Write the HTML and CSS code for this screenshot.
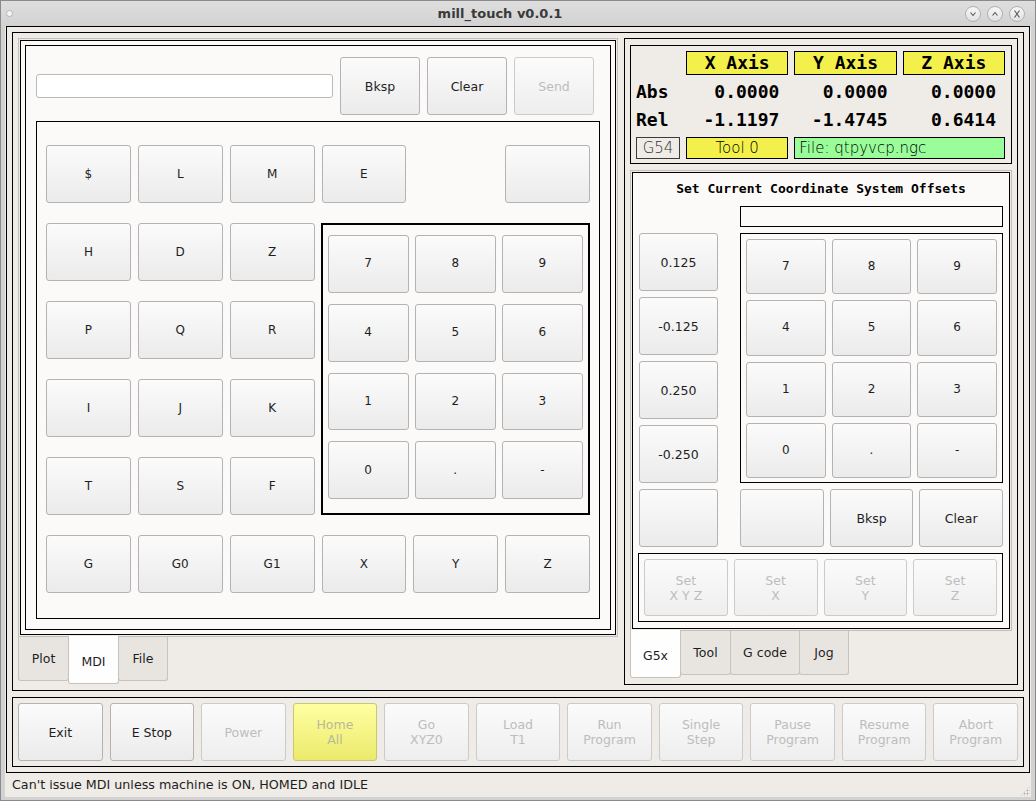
FILE: index.html
```html
<!DOCTYPE html>
<html lang="en">
<head>
<meta charset="utf-8">
<title>mill_touch v0.0.1</title>
<link rel="stylesheet" href="styles.css">
</head>
<body>
<div class="window">
  <div class="titlebar">
    <span class="tb-dot"></span>
    <span class="tb-title">mill_touch v0.0.1</span>
    <div class="tb-btns">
      <span class="tb-btn"><svg width="8" height="8" viewBox="0 0 8 8"><path d="M1.5 2.5 L4 5.5 L6.5 2.5" fill="none" stroke="#555" stroke-width="1.1"/></svg></span>
      <span class="tb-btn"><svg width="8" height="8" viewBox="0 0 8 8"><path d="M1.5 5.5 L4 2.5 L6.5 5.5" fill="none" stroke="#555" stroke-width="1.1"/></svg></span>
      <span class="tb-btn"><svg width="8" height="10" viewBox="0 0 8 10"><path d="M1.5 1.5 L6.5 8.5 M6.5 1.5 L1.5 8.5" fill="none" stroke="#555" stroke-width="1.1"/></svg></span>
    </div>
  </div>
  <div class="client">
    <div class="app-frame">
      <div class="top-frame">
        <div class="left-tabs">
          <div class="pane">
            <div class="page-outer">
              <div class="page-inner">
                <div class="mdi-top">
                  <div class="line-edit"></div>
                  <button class="btn w80">Bksp</button>
                  <button class="btn w80">Clear</button>
                  <button class="btn w80 dis">Send</button>
                </div>
                <div class="keypad">
                  <button class="btn key">$</button>
                  <button class="btn key">L</button>
                  <button class="btn key">M</button>
                  <button class="btn key">E</button>
                  <div class="spacer"></div>
                  <button class="btn key"></button>
                  <div class="numpad">
                    <button class="btn key">7</button>
                    <button class="btn key">8</button>
                    <button class="btn key">9</button>
                    <button class="btn key">4</button>
                    <button class="btn key">5</button>
                    <button class="btn key">6</button>
                    <button class="btn key">1</button>
                    <button class="btn key">2</button>
                    <button class="btn key">3</button>
                    <button class="btn key">0</button>
                    <button class="btn key">.</button>
                    <button class="btn key">-</button>
                  </div>
                  <button class="btn key">H</button>
                  <button class="btn key">D</button>
                  <button class="btn key">Z</button>
                  <button class="btn key">P</button>
                  <button class="btn key">Q</button>
                  <button class="btn key">R</button>
                  <button class="btn key">I</button>
                  <button class="btn key">J</button>
                  <button class="btn key">K</button>
                  <button class="btn key">T</button>
                  <button class="btn key">S</button>
                  <button class="btn key">F</button>
                  <button class="btn key">G</button>
                  <button class="btn key">G0</button>
                  <button class="btn key">G1</button>
                  <button class="btn key">X</button>
                  <button class="btn key">Y</button>
                  <button class="btn key">Z</button>
                </div>
              </div>
            </div>
          </div>
          <div class="tabbar">
            <div class="tab w50">Plot</div>
            <div class="tab w50 sel">MDI</div>
            <div class="tab w49">File</div>
          </div>
        </div>

        <div class="right-panel">
          <div class="dro">
            <div></div>
            <div class="axis">X Axis</div>
            <div class="axis">Y Axis</div>
            <div class="axis">Z Axis</div>
            <div class="lbl r1">Abs</div>
            <div class="num r1">0.0000</div>
            <div class="num r1">0.0000</div>
            <div class="num r1">0.0000</div>
            <div class="lbl r2">Rel</div>
            <div class="num r2">-1.1197</div>
            <div class="num r2">-1.4745</div>
            <div class="num r2">0.6414</div>
            <div class="g54">G54</div>
            <div class="tool">Tool 0</div>
            <div class="file">File: qtpyvcp.ngc</div>
          </div>

          <div class="right-tabs">
            <div class="pane rpane">
              <div class="g5x-page">
                <div class="g5x-title">Set Current Coordinate System Offsets</div>
                <div class="g5x-grid">
                  <div></div>
                  <div class="entry"></div>
                  <div class="inc-col">
                    <button class="btn">0.125</button>
                    <button class="btn">-0.125</button>
                    <button class="btn">0.250</button>
                    <button class="btn">-0.250</button>
                  </div>
                  <div class="numpad2">
                    <button class="btn key">7</button>
                    <button class="btn key">8</button>
                    <button class="btn key">9</button>
                    <button class="btn key">4</button>
                    <button class="btn key">5</button>
                    <button class="btn key">6</button>
                    <button class="btn key">1</button>
                    <button class="btn key">2</button>
                    <button class="btn key">3</button>
                    <button class="btn key">0</button>
                    <button class="btn key">.</button>
                    <button class="btn key">-</button>
                  </div>
                  <button class="btn"></button>
                  <div class="edit-row">
                    <button class="btn"></button>
                    <button class="btn">Bksp</button>
                    <button class="btn">Clear</button>
                  </div>
                </div>
                <div class="set-frame">
                  <button class="btn dis">Set<br>X Y Z</button>
                  <button class="btn dis">Set<br>X</button>
                  <button class="btn dis">Set<br>Y</button>
                  <button class="btn dis">Set<br>Z</button>
                </div>
              </div>
            </div>
            <div class="tabbar">
              <div class="tab w50 sel">G5x</div>
              <div class="tab w50">Tool</div>
              <div class="tab w69">G code</div>
              <div class="tab w49">Jog</div>
            </div>
          </div>
        </div>
      </div>

      <div class="bottom-frame">
        <button class="btn">Exit</button>
        <button class="btn">E Stop</button>
        <button class="btn dis">Power</button>
        <button class="btn dis home">Home<br>All</button>
        <button class="btn dis">Go<br>XYZ0</button>
        <button class="btn dis">Load<br>T1</button>
        <button class="btn dis">Run<br>Program</button>
        <button class="btn dis">Single<br>Step</button>
        <button class="btn dis">Pause<br>Program</button>
        <button class="btn dis">Resume<br>Program</button>
        <button class="btn dis">Abort<br>Program</button>
      </div>
    </div>
    <div class="statusbar">
      <span>Can't issue MDI unless machine is ON, HOMED and IDLE</span>
      <span class="grip"></span>
    </div>
  </div>
</div>
</body>
</html>
```

FILE: styles.css
```css
* { box-sizing: border-box; }
html, body { margin: 0; padding: 0; }
body {
  width: 1036px;
  height: 801px;
  overflow: hidden;
  font-family: "DejaVu Sans", "Liberation Sans", sans-serif;
  font-size: 12.5px;
  color: #1e1e1e;
  background: #d3d3d3;
}

.window {
  width: 1036px;
  height: 801px;
  border: 1px solid #8a8a8a;
  background: #d2d2d2;
  display: flex;
  flex-direction: column;
}

/* title bar */
.titlebar {
  height: 25px;
  flex: none;
  display: flex;
  align-items: center;
  background: linear-gradient(#dedede, #d2d2d2);
}
.tb-dot {
  width: 7px;
  height: 7px;
  margin-left: 5px;
  border-radius: 50%;
  background: #f6f6f6;
  border: 1px solid #b4b4b4;
}
.tb-title {
  flex: 1;
  text-align: center;
  padding-left: 22px;
  font-weight: bold;
  font-size: 13px;
  color: #3a3a3a;
}
.tb-btns {
  display: flex;
  gap: 6px;
  margin-right: 10px;
}
.tb-btn {
  width: 16px;
  height: 16px;
  border-radius: 50%;
  border: 1px solid #b1b1b1;
  background: linear-gradient(#f7f7f7, #e2e2e2);
  display: flex;
  align-items: center;
  justify-content: center;
}

/* client area */
.client {
  flex: 1;
  margin: 0 4px 3px 4px;
  background: #efebe7;
  display: flex;
  flex-direction: column;
}
.app-frame {
  margin: 0 1px;
  height: 747px;
  border: 1px solid #000;
  padding: 5px;
  display: flex;
  flex-direction: column;
  gap: 6px;
}
.top-frame {
  flex: 1;
  border: 1px solid #000;
  padding: 5px;
  display: flex;
  gap: 6px;
}
.bottom-frame {
  height: 70px;
  flex: none;
  border: 1px solid #000;
  padding: 5px;
  display: flex;
  gap: 7px;
}
.bottom-frame .btn { flex: 1; }

.statusbar {
  flex: 1;
  padding-left: 7px;
  padding-bottom: 1px;
  display: flex;
  align-items: center;
  font-size: 12.7px;
  color: #1e1e1e;
  position: relative;
}
.grip {
  position: absolute;
  right: 1px;
  bottom: 1px;
  width: 10px;
  height: 10px;
  background-image: radial-gradient(circle, #a9a6a2 0.8px, transparent 1.1px);
  background-size: 3px 3px;
  clip-path: polygon(100% 0, 100% 100%, 0 100%);
}

/* buttons */
.btn {
  font-family: inherit;
  font-size: 12.5px;
  color: #1e1e1e;
  margin: 0;
  padding: 0;
  border: 1px solid #b3b3b3;
  border-radius: 3px;
  background: linear-gradient(#fbfbfb, #ebebeb);
  display: flex;
  align-items: center;
  justify-content: center;
  text-align: center;
  line-height: 15px;
}
.btn.key { font-size: 12px; }
.btn.dis {
  color: #bdbdbd;
  border-color: #cbcbcb;
  background: linear-gradient(#fbfbfb, #eeeeee);
}
.btn.home {
  background: linear-gradient(#ffffa2, #ebea6c);
  border-color: #c9c86a;
  color: #b9b99a;
}
.w80 { width: 80px; height: 58px; flex: none; }

/* tab widgets */
.left-tabs {
  width: 600px;
  flex: none;
  display: flex;
  flex-direction: column;
}
.pane {
  border: 1px solid #c3c0bc;
  padding: 1px;
}
.left-tabs .pane { height: 599px; }
.page-outer {
  height: 100%;
  border: 1px solid #000;
  padding: 4px;
  background: #fcfaf8;
}
.page-inner {
  height: 100%;
  border: 1px solid #000;
  padding: 11px 10px 10px 10px;
  display: flex;
  flex-direction: column;
  gap: 6px;
}
.tabbar {
  display: flex;
  align-items: flex-start;
}
.tab {
  height: 44px;
  border: 1px solid #c6c3bf;
  border-top: none;
  border-radius: 0 0 3px 3px;
  background: #e8e5e1;
  display: flex;
  align-items: center;
  justify-content: center;
  font-size: 12.5px;
  color: #1e1e1e;
  margin-right: -1px;
}
.tab.sel {
  height: 48px;
  margin-top: -1px;
  padding-top: 3px;
  background: #fefefe;
  position: relative;
  z-index: 1;
}
.w50 { width: 51px; }
.w49 { width: 50px; }
.w69 { width: 70px; }

/* MDI page */
.mdi-top {
  height: 58px;
  flex: none;
  display: flex;
  align-items: center;
  gap: 7px;
  padding-right: 6px;
}
.line-edit {
  flex: 1;
  height: 24px;
  background: #fff;
  border: 1px solid #b9b9b9;
  border-radius: 3px;
}
.keypad {
  flex: 1;
  border: 1px solid #000;
  padding: 23px 9px 25px 9px;
  display: grid;
  grid-template-columns: repeat(6, 1fr);
  grid-template-rows: repeat(6, 58px);
  column-gap: 7px;
  row-gap: 20px;
}
.numpad {
  grid-column: 4 / 7;
  grid-row: 2 / 6;
  border: 2px solid #000;
  margin-left: -1px;
  padding: 10px 5px 14px 5px;
  display: grid;
  grid-template-columns: repeat(3, 1fr);
  grid-template-rows: repeat(4, 1fr);
  column-gap: 6px;
  row-gap: 11px;
}

/* right panel */
.right-panel {
  flex: 1;
  border: 1px solid #000;
  padding: 6px 5px 5px 5px;
  display: flex;
  flex-direction: column;
  gap: 6px;
}
.dro {
  height: 119px;
  flex: none;
  border: 1px solid #000;
  padding: 5px 6px 0 5px;
  display: grid;
  grid-template-columns: 44px 1fr 1fr 1fr;
  grid-template-rows: 24px 31px 31px 22px;
  column-gap: 6px;
  font-family: "DejaVu Sans Mono", "Liberation Mono", monospace;
  font-weight: bold;
  font-size: 18px;
  color: #000;
}
.axis {
  background: #f3f04b;
  border: 1px solid #000;
  text-align: center;
  line-height: 22px;
}
.lbl, .num { line-height: 28px; }
.num { text-align: right; padding-right: 9px; }
.r1 { align-self: end; }
.r2 { align-self: start; }
.g54, .tool, .file {
  font-family: "DejaVu Sans", sans-serif;
  font-weight: 200;
  font-size: 15px;
  line-height: 20px;
  color: #000;
  border: 1px solid #000;
}
.g54 {
  border-color: #3a3a3a;
  text-align: center;
  color: #333;
}
.tool {
  background: #f3f04b;
  text-align: center;
}
.file {
  grid-column: span 2;
  background: #99fe99;
  padding-left: 4px;
}

.right-tabs {
  flex: 1;
  display: flex;
  flex-direction: column;
}
.rpane { height: 461px; flex: none; }
.g5x-page {
  height: 100%;
  border: 1px solid #000;
  background: #fcfaf8;
  padding: 0 6px 6px 6px;
  display: flex;
  flex-direction: column;
}
.g5x-title {
  height: 33px;
  flex: none;
  padding-top: 8px;
  text-align: center;
  font-family: "DejaVu Sans Mono", "Liberation Mono", monospace;
  font-weight: bold;
  font-size: 13px;
  line-height: 16px;
  color: #000;
}
.g5x-grid {
  display: grid;
  grid-template-columns: 79px 1fr;
  grid-template-rows: 21px 250px 58px;
  column-gap: 22px;
  row-gap: 6px;
}
.entry {
  border: 1px solid #000;
  background: #fcfaf8;
}
.inc-col {
  display: flex;
  flex-direction: column;
  gap: 6px;
}
.inc-col .btn { flex: 1; }
.numpad2 {
  border: 1px solid #000;
  padding: 5px 5px 4px 5px;
  display: grid;
  grid-template-columns: repeat(3, 1fr);
  grid-template-rows: repeat(4, 1fr);
  gap: 6px;
}
.edit-row {
  display: flex;
  gap: 6px;
}
.edit-row .btn { flex: 1; }
.set-frame {
  margin-top: 6px;
  margin-left: -1px;
  height: 69px;
  border: 1px solid #000;
  padding: 5px;
  display: flex;
  gap: 6px;
}
.set-frame .btn { flex: 1; }
```
